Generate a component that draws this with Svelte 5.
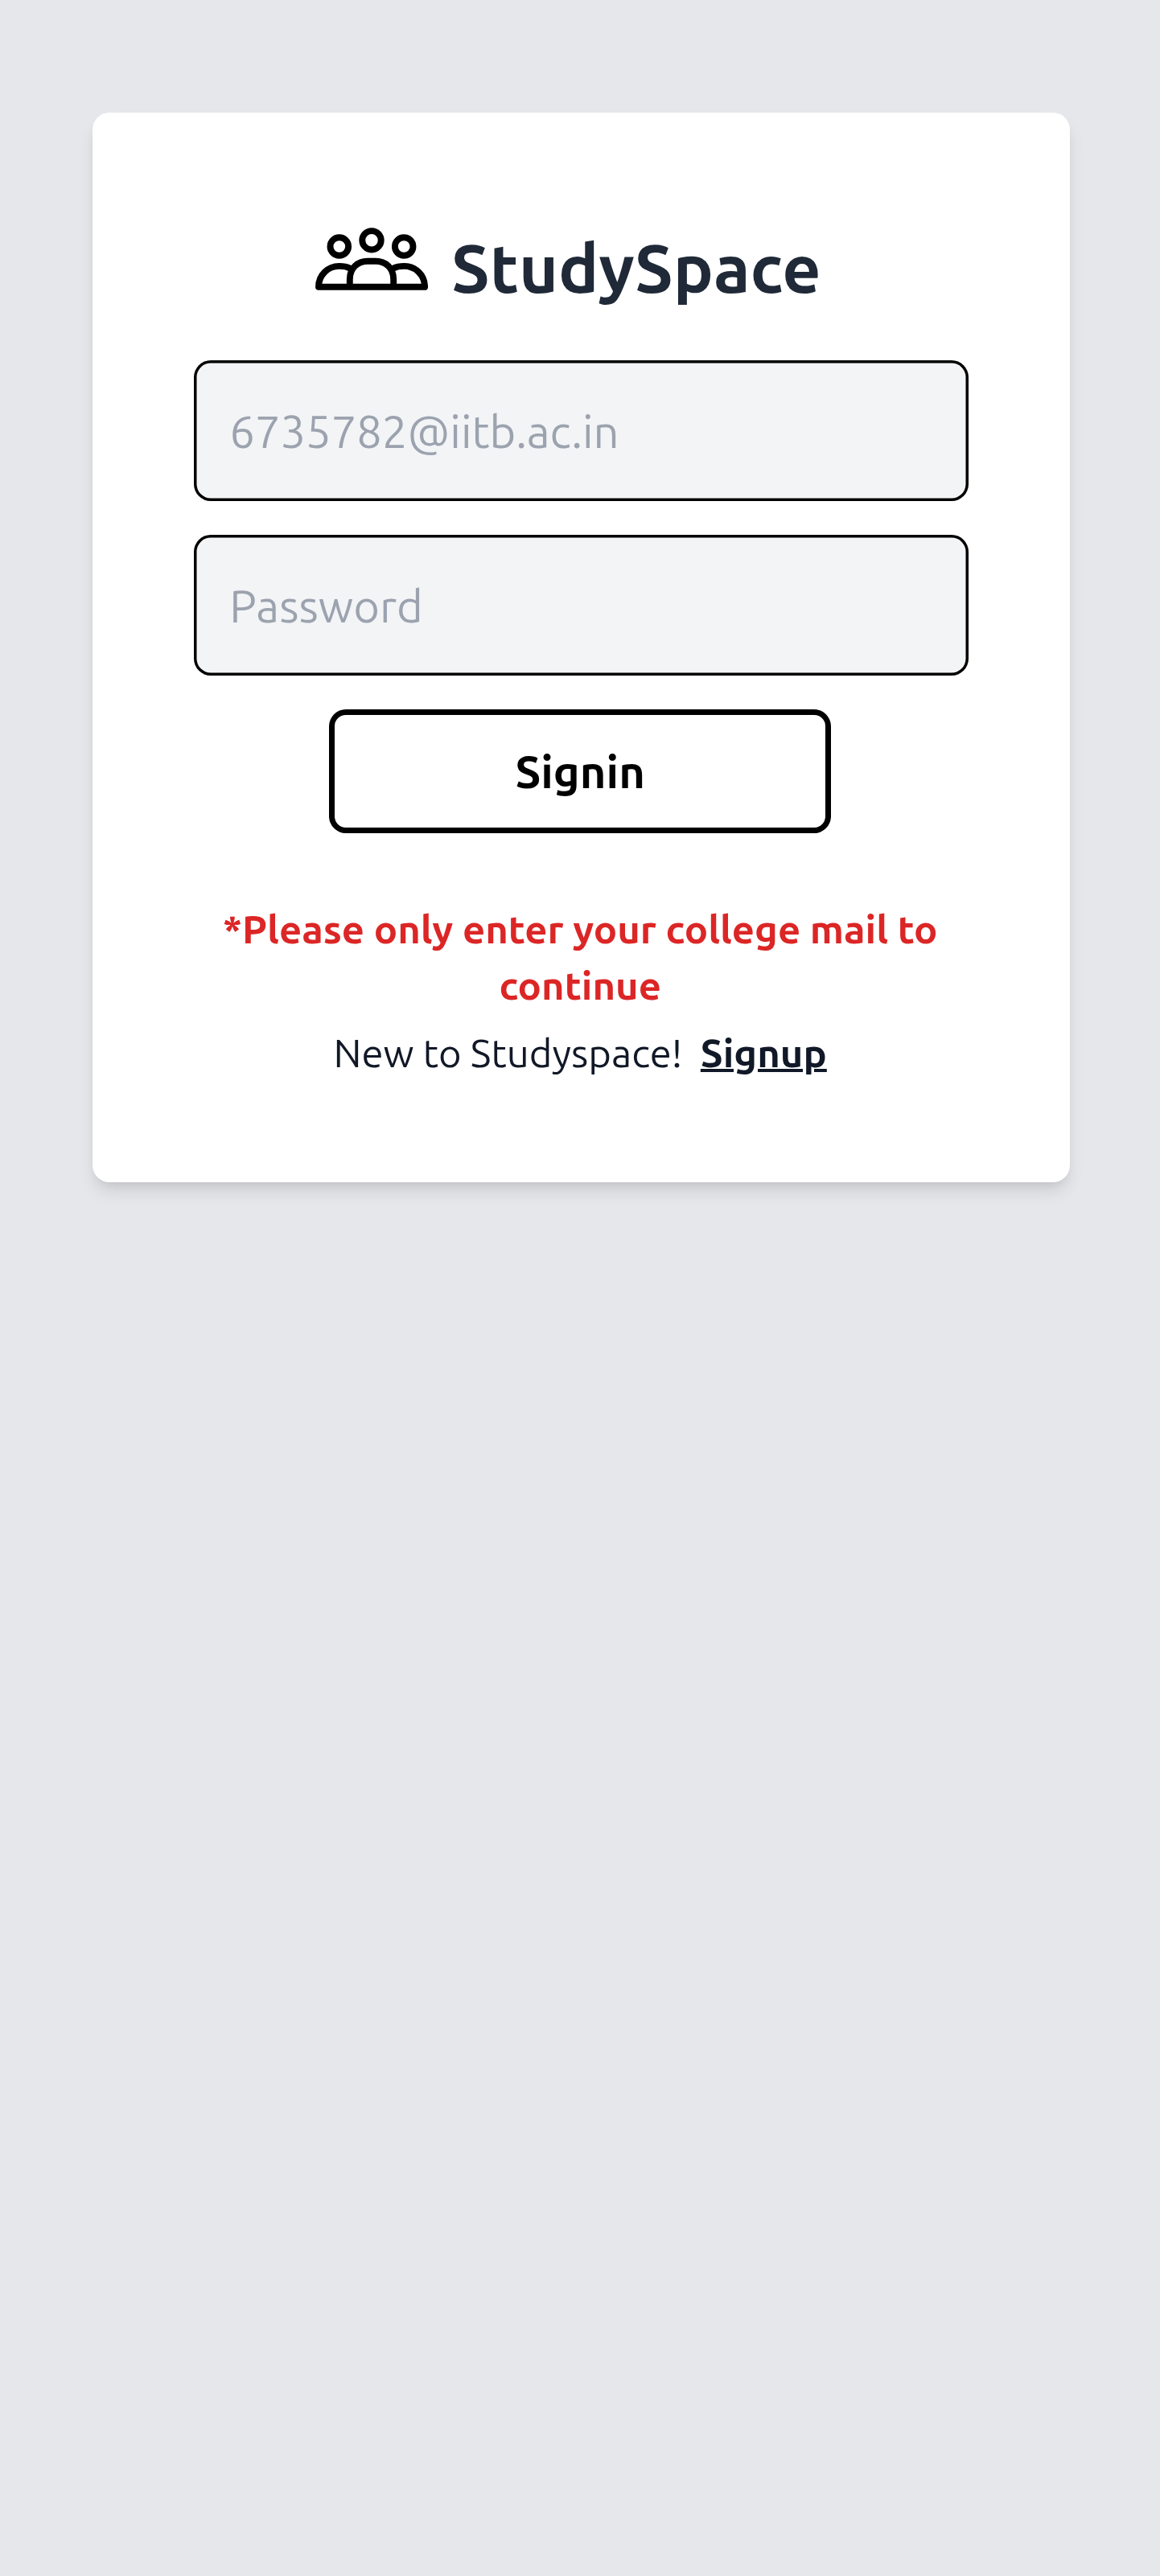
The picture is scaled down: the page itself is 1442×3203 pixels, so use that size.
<script>
  let email = $state('');
  let password = $state('');
</script>

<main class="page">
  <section class="card">
    <header class="brand">
      <svg class="logo" viewBox="392 283 140 78" aria-hidden="true">
        <circle cx="462" cy="298.8" r="11.7" />
        <circle cx="421.8" cy="306.5" r="11.3" />
        <circle cx="502.2" cy="306.5" r="11.3" />
        <path d="M434.8 356.8V347.3C434.8 333 445 324.8 457 324.8H467C479 324.8 489.2 333 489.2 347.3V356.8" />
        <path d="M435.5 333.8C431.5 331.8 426.5 330.9 421.7 330.9C407.5 330.9 396 342.2 396 356.8H528.1C528.1 342.2 516.6 330.9 502.4 330.9C497.6 330.9 492.6 331.8 488.6 333.8" />
      </svg>
      <h1>StudySpace</h1>
    </header>

    <form onsubmit={(e) => e.preventDefault()}>
      <input type="email" placeholder="6735782@iitb.ac.in" bind:value={email} />
      <input type="password" placeholder="Password" bind:value={password} />
      <button type="submit">Signin</button>
    </form>

    <div class="notes">
      <p class="warning">*Please only enter your college mail to continue</p>
      <p class="signup"><span>New to Studyspace!</span><a href="#signup">Signup</a></p>
    </div>
  </section>
</main>

<style>
  :global(body) {
    background: #e5e7eb;
  }

  .page {
    box-sizing: border-box;
    min-height: 3203px;
    padding: 140px 112px 0 115.36px;
    background: #e5e7eb;
    font-family: Ubuntu, 'Open Sans', sans-serif;
  }

  .card {
    box-sizing: border-box;
    height: 1330px;
    padding: 137px 126px 0;
    border-radius: 21px;
    background: #fff;
    box-shadow:
      0 14px 21px -3.5px rgb(0 0 0 / 0.1),
      0 7px 14px -7px rgb(0 0 0 / 0.1);
  }

  .brand {
    display: flex;
    gap: 29px;
    height: 112px;
    padding-left: 150.64px;
  }

  .logo {
    width: 140px;
    height: 78px;
    margin-top: 6px;
    fill: none;
    stroke: #000;
    stroke-width: 7.9;
    stroke-linejoin: round;
  }

  h1 {
    margin: 0;
    color: #1f2937;
    font-size: 84px;
    font-weight: 600;
    line-height: 112px;
  }

  form {
    display: flex;
    flex-direction: column;
    align-items: center;
    gap: 42px;
    margin-top: 59px;
  }

  input,
  button {
    box-sizing: border-box;
    border: 0;
    border-radius: 21px;
    font-family: inherit;
    font-size: 56px;
    line-height: 84px;
    outline: none;
  }

  input {
    width: 100%;
    height: 175px;
    padding: 2px 44px 0;
    background: #f3f4f6;
    box-shadow: inset 0 0 0 3.5px #000;
    font-weight: 400;
  }

  input::placeholder {
    color: #9ca3af;
    opacity: 1;
  }

  button {
    width: 623.5px;
    height: 154px;
    padding: 2px 0 0;
    margin-right: 3px;
    background: #fff;
    box-shadow: inset 0 0 0 7px #000;
    color: #000;
    font-weight: 600;
  }

  .notes {
    display: flex;
    flex-direction: column;
    gap: 14px;
    margin-top: 84px;
    padding-right: 3px;
    font-size: 49px;
    line-height: 70px;
    text-align: center;
  }

  p {
    margin: 0;
  }

  .warning {
    color: #dc2626;
    font-weight: 600;
  }

  .signup {
    display: flex;
    justify-content: center;
    gap: 22.5px;
    color: #111827;
  }

  a {
    color: inherit;
    font-weight: 600;
    text-decoration: underline;
    text-decoration-thickness: 3.5px;
  }
</style>
